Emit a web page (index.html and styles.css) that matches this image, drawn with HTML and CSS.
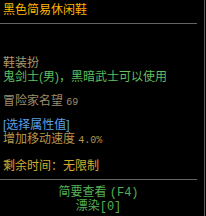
FILE: index.html
```html
<!DOCTYPE html>
<html>
<head>
<meta charset="utf-8">
<link rel="stylesheet" href="styles.css">
</head>
<body>
<div class="tip">
  <div class="inner">
    <div class="title">黑色简易休闲鞋</div>
    <div class="rule rule-top"></div>
    <div class="block b-type">
      <div class="line c-tan">鞋装扮</div>
      <div class="line c-green">鬼剑士(男)，黑暗武士可以使用</div>
    </div>
    <div class="block b-fame">
      <div class="line c-fame">冒险家名望 <span class="num">69</span></div>
    </div>
    <div class="block b-attr">
      <div class="line c-blue">[选择属性值]</div>
      <div class="line c-gold">增加移动速度 <span class="num">4.0%</span></div>
    </div>
    <div class="block b-time">
      <div class="line c-yellow">剩余时间：无限制</div>
    </div>
    <div class="rule rule-bottom"></div>
    <div class="footer">
      <div class="line c-foot">简要查看 <span class="mono">(F4)</span></div>
      <div class="line c-foot">漂染<span class="mono">[0]</span></div>
    </div>
  </div>
</div>
</body>
</html>
```
FILE: styles.css
```css
html, body {
  margin: 0;
  padding: 0;
  background: #000;
}
body {
  width: 206px;
  height: 216px;
  overflow: hidden;
  font-family: "Liberation Sans", "Noto Sans CJK SC", sans-serif;
  font-size: 12px;
  line-height: 14px;
}
.tip {
  width: 204px;
  height: 216px;
  border-right: 1px solid #5a5a5a;
}
.inner {
  width: 197px;
  padding-top: 3px;
}
.title {
  padding-left: 3px;
  color: #ffb400;
  line-height: 14px;
}
.rule {
  height: 1px;
  background: #646464;
}
.rule-top { margin-top: 6px; }
.rule-bottom { margin-top: 6px; }
.block { padding-left: 3px; }
.b-type { margin-top: 32px; }
.b-fame { margin-top: 10px; }
.b-attr { margin-top: 10px; }
.b-time { margin-top: 13px; }
.line { height: 14px; white-space: nowrap; }
.num {
  font-family: "Liberation Mono", monospace;
  font-size: 10px;
}
.mono {
  font-family: "Liberation Mono", monospace;
  font-size: 12px;
  line-height: 14px;
}
.c-tan { color: #a99a72; }
.c-green { color: #5fbf5f; }
.c-fame { color: #9c8c6a; }
.c-blue { color: #5aa0e8; }
.c-gold { color: #b8964a; }
.c-yellow { color: #d6ac30; }
.footer {
  margin-top: 5px;
  text-align: center;
}
.c-foot { color: #55b055; }
```
